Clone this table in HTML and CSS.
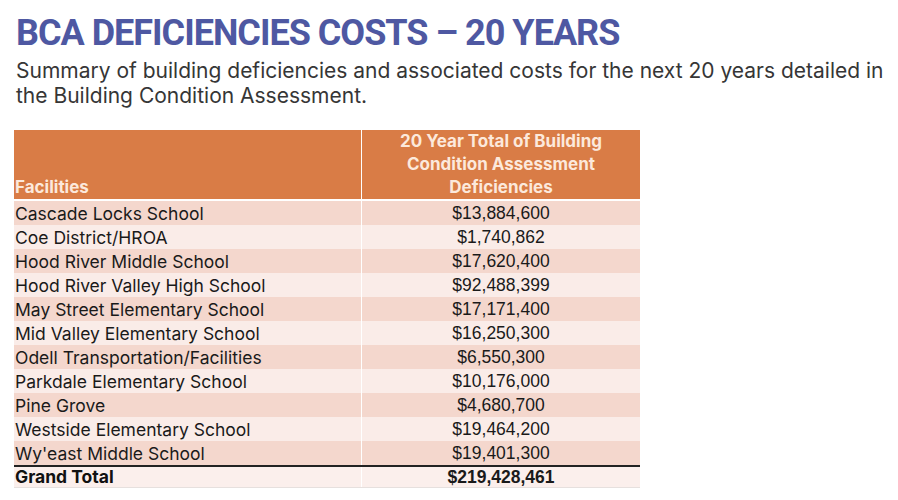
FILE: index.html
```html
<!DOCTYPE html>
<html lang="en">
<head>
    <meta charset="UTF-8">
    <title>BCA Deficiencies Costs – 20 Years</title>
    <link rel="stylesheet" href="styles.css">
</head>
<body>
    <header>
        <h1>BCA DEFICIENCIES COSTS – 20 YEARS</h1>
        <p>Summary of building deficiencies and associated costs for the next 20 years detailed in the Building Condition Assessment.</p>
    </header>

    <table class="costs">
        <thead>
            <tr>
                <th class="name">Facilities</th>
                <th class="amount">20 Year Total of Building Condition Assessment Deficiencies</th>
            </tr>
        </thead>
        <tbody>
            <tr><td class="name">Cascade Locks School</td><td class="amount">$13,884,600</td></tr>
            <tr><td class="name">Coe District/HROA</td><td class="amount">$1,740,862</td></tr>
            <tr><td class="name">Hood River Middle School</td><td class="amount">$17,620,400</td></tr>
            <tr><td class="name">Hood River Valley High School</td><td class="amount">$92,488,399</td></tr>
            <tr><td class="name">May Street Elementary School</td><td class="amount">$17,171,400</td></tr>
            <tr><td class="name">Mid Valley Elementary School</td><td class="amount">$16,250,300</td></tr>
            <tr><td class="name">Odell Transportation/Facilities</td><td class="amount">$6,550,300</td></tr>
            <tr><td class="name">Parkdale Elementary School</td><td class="amount">$10,176,000</td></tr>
            <tr><td class="name">Pine Grove</td><td class="amount">$4,680,700</td></tr>
            <tr><td class="name">Westside Elementary School</td><td class="amount">$19,464,200</td></tr>
            <tr><td class="name">Wy'east Middle School</td><td class="amount">$19,401,300</td></tr>
        </tbody>
        <tfoot>
            <tr><td class="name">Grand Total</td><td class="amount">$219,428,461</td></tr>
        </tfoot>
    </table>
</body>
</html>
```

FILE: styles.css
```css
body {
    margin: 0;
    padding: 14px 14px 0 14px;
    font-family: Inter, "Open Sans", sans-serif;
    background-color: #fff;
}
header h1 {
    margin: 0 0 0 2px;
    font-family: Roboto, Inter, sans-serif;
    font-size: 36px;
    line-height: 38px;
    font-weight: 700;
    letter-spacing: -1px;
    color: #4e58a2;
}
header p {
    margin: 6px 0 0 2px;
    font-size: 21px;
    line-height: 25px;
    color: #363636;
}
.costs {
    margin-top: 22px;
    width: 626px;
    border-collapse: collapse;
}
.costs th,
.costs td {
    padding: 0 1px;
    height: 24px;
    font-size: 17.5px;
    line-height: 23px;
}
.costs .name {
    width: 345px;
    text-align: left;
    border-right: 1px solid #fff;
}
.costs .amount {
    text-align: center;
    font-family: "Liberation Sans", Arial, sans-serif;
    font-size: 17.5px;
    color: #1a1a1a;
}
.costs thead th {
    background-color: #d97c46;
    color: #fce9dc;
    font-weight: 700;
    font-size: 17px;
    line-height: 23px;
    vertical-align: bottom;
    padding-bottom: 0;
    border-bottom: 2px solid #fff;
}
.costs thead th.amount {
    font-family: Inter, "Open Sans", sans-serif;
    font-size: 17px;
    color: #fce9dc;
    padding: 0 34px;
}
.costs tbody td {
    color: #1a1a1a;
}
.costs tbody tr:nth-child(odd) td {
    background-color: #f4d7cd;
}
.costs tbody tr:nth-child(even) td {
    background-color: #faece8;
}
.costs tfoot td {
    height: 20px;
    line-height: 20px;
    background-color: #fbefec;
    font-weight: 700;
    color: #111;
    border-top: 2px solid #222;
    border-bottom: 1px solid #e6e0de;
}
```
